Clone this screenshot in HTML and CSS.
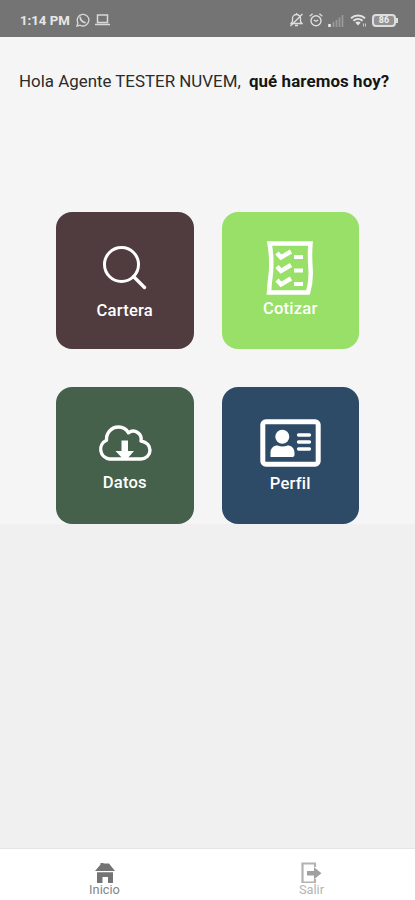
FILE: index.html
```html
<!DOCTYPE html>
<html lang="es">
<head>
  <meta charset="UTF-8">
  <meta name="viewport" content="width=device-width, initial-scale=1.0">
  <title>Inicio</title>
  <link rel="stylesheet" href="styles.css">
</head>
<body>
  <header class="status-bar">
    <span class="time">1:14 PM</span>
    <svg class="whatsapp" width="14" height="14" viewBox="0 0 14 14">
      <path d="M1 13l.9-3.2A5.8 5.8 0 1 1 4.200 12.200Z" fill="none" stroke="#d8d8d8" stroke-width="1.300"/>
      <path d="M4.800 4c-.9.600-.5 2.100.8 3.600s3 2.300 3.900 1.500" fill="none" stroke="#d8d8d8" stroke-width="1.700"/>
    </svg>
    <svg class="laptop" width="15" height="12" viewBox="0 0 15 12">
      <path d="M2.500 1h10v7.500h-10ZM0 10.600h15" fill="none" stroke="#d8d8d8" stroke-width="1.500"/>
    </svg>
    <div class="status-icons">
      <svg width="15" height="14" viewBox="0 0 15 14">
        <path d="M2 10.500h11L11.500 8.500V5.500a4 4 0 0 0-8 0v3ZM6 12.500h3M7.500 0v2M1.500 13L13.500 1" fill="none" stroke="#dedede" stroke-width="1.300"/>
      </svg>
      <svg width="14" height="14" viewBox="0 0 14 14">
        <circle cx="7" cy="7.800" r="5" fill="none" stroke="#dedede" stroke-width="1.400"/>
        <path d="M.7 3.200L3.600.8M13.300 3.200L10.400.8M4.800 7l2.200 1.300L9.200 7" fill="none" stroke="#dedede" stroke-width="1.300"/>
      </svg>
      <svg width="16" height="13" viewBox="0 0 16 13">
        <path d="M1.500 10v3" stroke="#eee" stroke-width="2.500"/>
        <path d="M5.500 8v5M8.500 6v7M11.500 3.500V13M14.500 1v12" stroke="#9b9b9b" stroke-width="1.700"/>
      </svg>
      <svg class="wifi" width="17" height="13" viewBox="0 0 17 13">
        <path d="M1 4.200c4-3.600 10-3.600 14 0M3.400 6.800c2.700-2.400 6.500-2.400 9.200 0" fill="none" stroke="#e4e4e4" stroke-width="2"/>
        <path d="M5.300 8.500c1.600-1.300 3.800-1.300 5.400 0L8 11.500Z" fill="#e4e4e4"/>
        <path d="M13.500 9.500v3M15.500 9.500v3" stroke="#ccc" stroke-width="1"/>
      </svg>
      <div class="battery">86</div>
    </div>
  </header>

  <main>
    <section class="home">
      <p class="greeting">Hola Agente TESTER NUVEM, <b>qué haremos hoy?</b></p>
      <div class="tiles">
        <a class="tile cartera">
          <svg width="44" height="44" viewBox="0 0 44 44">
            <circle cx="18.500" cy="18.500" r="17" fill="none" stroke="#fff" stroke-width="3"/>
            <path d="M30.500 30.500L41.500 41.500" stroke="#fff" stroke-width="3.400" stroke-linecap="round"/>
          </svg>
          <span>Cartera</span>
        </a>
        <a class="tile cotizar">
          <svg width="48" height="55" viewBox="0 0 48 55">
            <path d="M3.500 2.500H44.500Q43.500 14 44.500 27T42 51.500H3Q3.500 42 5 31Q6 15 3.500 2.500Z" fill="none" stroke="#fff" stroke-width="4.500"/>
            <path d="M11 12l4 4.500L25 10.500M11 25.500L15 30L25 24M11 39l4 4.500L25 37.500" fill="none" stroke="#fff" stroke-width="4.400"/>
            <path d="M28 16h9M28 29.500h9M28 43h9" stroke="#fff" stroke-width="4.200"/>
          </svg>
          <span>Cotizar</span>
        </a>
        <a class="tile datos">
          <svg width="54" height="36" viewBox="0 0 54 36">
            <path d="M11.500 34A9.800 9.800 0 0 1 8.500 15.300C8 8 13.500 2 20.500 2C25 2 28.500 4.300 30.500 7.800C36.500 3.500 44.500 8.500 43 16C49 17 52 21 52 25.200C52 30 48 34 43 34Z" fill="none" stroke="#fff" stroke-width="3.400" stroke-linejoin="round"/>
            <path d="M23.500 15.500h6.500V26h6L29 34h-4L17.500 26h6Z" fill="#fff"/>
          </svg>
          <span>Datos</span>
        </a>
        <a class="tile perfil">
          <svg width="61" height="48" viewBox="0 0 61 48">
            <rect x="2.800" y="2.800" width="55.400" height="42.400" rx="3" fill="none" stroke="#fff" stroke-width="5"/>
            <circle cx="22.300" cy="17.800" r="7" fill="#fff"/>
            <path d="M10.500 38v-4c0-5 3-7.500 7-7.500q5 2 10 0c4 0 7 2.500 7 7.500v2q0 2-2 2Z" fill="#fff"/>
            <path d="M38.500 16h11M38.500 23h11M38.500 30h11" stroke="#fff" stroke-width="3.300" stroke-linecap="round"/>
          </svg>
          <span>Perfil</span>
        </a>
      </div>
    </section>
  </main>

  <nav class="tab-bar">
    <a class="tab active">
      <svg width="20" height="21" viewBox="0 0 20 21">
        <path d="M0 9L5.500 2.500V1h3v.5H14L20 9Z" fill="#747474"/>
        <path d="M2 10.200h16V21h-5v-6H7.500v6H2Z" fill="#747474"/>
      </svg>
      <span>Inicio</span>
    </a>
    <a class="tab">
      <svg width="21" height="21" viewBox="0 0 21 21">
        <path d="M14 5V1.500H1.500v19H14V17" fill="none" stroke="#b2b2b2" stroke-width="2.200"/>
        <path d="M6 9h7V5.300l7.500 6L13 17.300V13.500H6Z" fill="#a0a0a0"/>
      </svg>
      <span>Salir</span>
    </a>
  </nav>
</body>
</html>
```
FILE: styles.css
```css
* {
  box-sizing: border-box;
}
body {
  margin: 0;
  height: 900px;
  display: flex;
  flex-direction: column;
  font-family: Roboto, sans-serif;
  background: #f0f0f0;
}
.status-bar {
  height: 37px;
  padding: 3px 17px 0 20px;
  display: flex;
  align-items: center;
  background: #747474;
  color: #e8e8e8;
}
.time {
  width: 50px;
  font-size: 13.2px;
  font-weight: 700;
  white-space: nowrap;
}
.whatsapp {
  margin: 0 5px 0 6px;
}
.status-icons {
  margin-left: auto;
  display: flex;
  align-items: center;
  gap: 5px;
}
.wifi {
  margin-left: 1px;
}
.battery {
  position: relative;
  width: 24px;
  height: 13px;
  margin-right: 2px;
  border: 2px solid #dedede;
  border-radius: 4px;
  background: #929292;
  color: #eee;
  font-size: 9px;
  font-weight: 700;
  line-height: 9px;
  text-align: center;
}
.battery::after {
  content: "";
  position: absolute;
  right: -4px;
  top: 2px;
  width: 2px;
  height: 5px;
  background: #dedede;
}
main {
  flex: 1;
}
.home {
  background: #f5f5f5;
}
.greeting {
  margin: 0;
  padding: 34px 0 0 19px;
  height: 175px;
  font-size: 16.9px;
  line-height: 20px;
  color: #2b2b2b;
  white-space: nowrap;
}
.greeting b {
  margin-left: 4px;
  color: #151515;
  letter-spacing: 0.1px;
}
.tiles {
  display: grid;
  grid-template-columns: 137.5px 137.5px;
  gap: 38px 28px;
  justify-content: center;
}
.tile {
  height: 137px;
  border-radius: 16px;
  display: flex;
  flex-direction: column;
  align-items: center;
  color: #fff;
  font-size: 16.6px;
  font-weight: 500;
  line-height: 20px;
  letter-spacing: 0.2px;
}
.cartera {
  padding-top: 34px;
  background: #503b3e;
}
.cartera span {
  margin-top: 11px;
}
.cotizar {
  padding-top: 29px;
  background: #99e069;
}
.cotizar span {
  margin-top: 3px;
}
.datos {
  padding-top: 38px;
  background: #45614b;
}
.datos span {
  margin-top: 12px;
}
.perfil {
  padding-top: 32px;
  background: #2d4b67;
}
.perfil span {
  margin-top: 7px;
}
.tab-bar {
  height: 52px;
  padding-left: 1px;
  display: flex;
  background: #fff;
  border-top: 1px solid #e6e6e6;
}
.tab {
  flex: 1;
  padding-top: 13px;
  display: flex;
  flex-direction: column;
  align-items: center;
  color: #b4b4b4;
  font-size: 12.8px;
  line-height: 14px;
}
.active {
  color: #858585;
}
```
